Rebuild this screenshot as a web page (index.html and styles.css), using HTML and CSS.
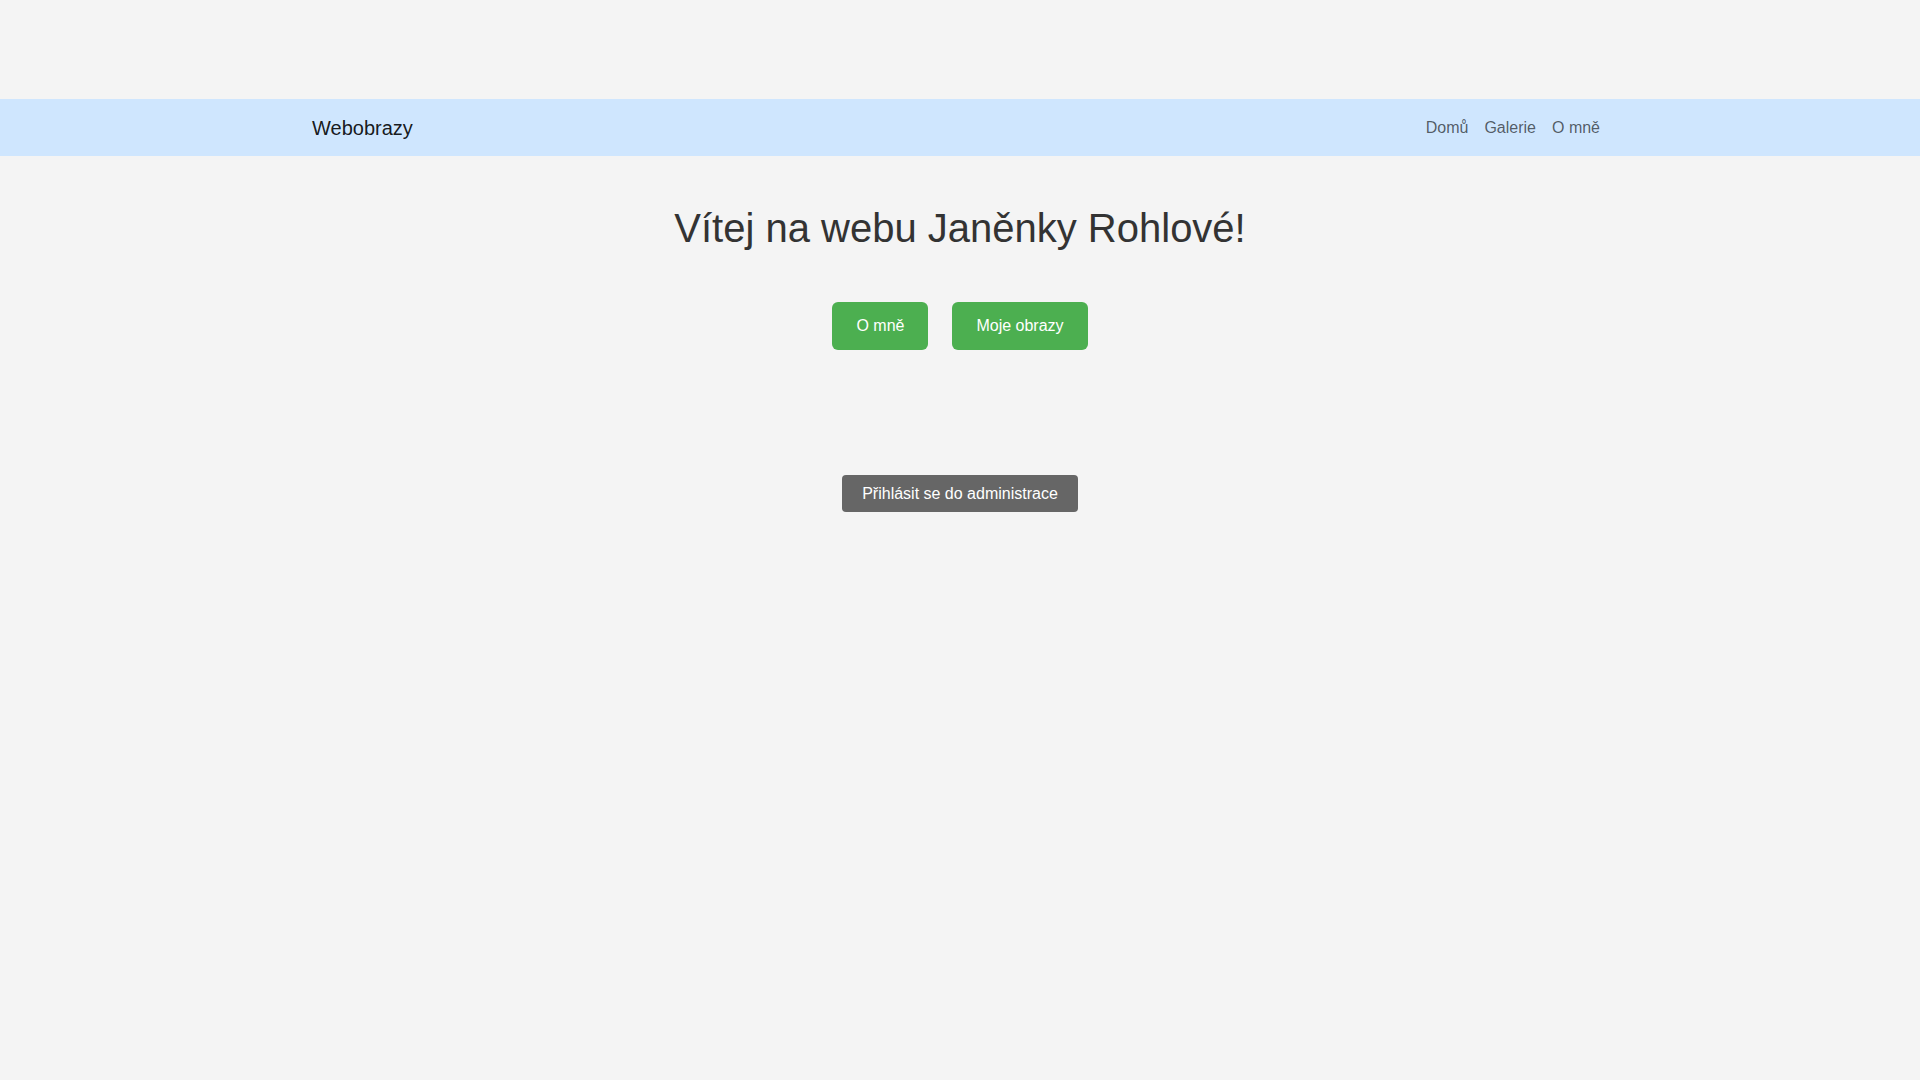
FILE: index.html
```html
<!DOCTYPE html>
<html lang="cs">
<head>
<meta charset="utf-8">
<title>Webobrazy</title>
<link rel="stylesheet" href="styles.css">
</head>
<body>
<div class="top-space"></div>
<nav class="navbar">
  <div class="container nav-inner">
    <a class="brand" href="#">Webobrazy</a>
    <ul class="nav-links">
      <li><a href="#">Domů</a></li>
      <li><a href="#">Galerie</a></li>
      <li><a href="#">O mně</a></li>
    </ul>
  </div>
</nav>
<main class="container main">
  <h1 class="title">Vítej na webu Janěnky Rohlové!</h1>
  <div class="actions">
    <a class="btn btn-green" href="#">O mně</a>
    <a class="btn btn-green" href="#">Moje obrazy</a>
  </div>
  <div class="admin">
    <a class="btn-admin" href="#">Přihlásit se do administrace</a>
  </div>
</main>
</body>
</html>
```
FILE: styles.css
```css
* { box-sizing: border-box; }
html, body {
  margin: 0;
  padding: 0;
  background: #f4f4f4;
  font-family: "Liberation Sans", Arial, sans-serif;
  font-size: 16px;
  line-height: 1.5;
  color: #212529;
}
.top-space { height: 99px; }
.navbar {
  background: #cfe6fe;
  height: 57px;
  display: flex;
  align-items: center;
}
.container {
  width: 1320px;
  margin: 0 auto;
  padding: 0 12px;
}
.nav-inner {
  display: flex;
  align-items: center;
  justify-content: space-between;
}
.brand {
  font-size: 20px;
  color: rgba(0,0,0,0.9);
  text-decoration: none;
  line-height: 30px;
}
.nav-links {
  list-style: none;
  margin: 0;
  padding: 0;
  display: flex;
}
.nav-links a {
  display: block;
  padding: 8px;
  color: rgba(0,0,0,0.62);
  text-decoration: none;
}
.main {
  text-align: center;
  padding-top: 48px;
}
.title {
  margin: 0;
  font-size: 40px;
  font-weight: 400;
  line-height: 48px;
  color: #333;
}
.actions {
  margin-top: 50px;
  display: flex;
  justify-content: center;
  gap: 24px;
}
.btn {
  display: inline-block;
  padding: 12px 24px;
  line-height: 24px;
  border-radius: 6px;
  text-decoration: none;
}
.btn-green {
  background: #4caf50;
  color: #fff;
}
.admin {
  margin-top: 125px;
  display: flex;
  justify-content: center;
}
.btn-admin {
  display: inline-block;
  background: #666;
  color: #fff;
  padding: 6px 20px;
  line-height: 25px;
  border-radius: 4px;
  text-decoration: none;
}
```
